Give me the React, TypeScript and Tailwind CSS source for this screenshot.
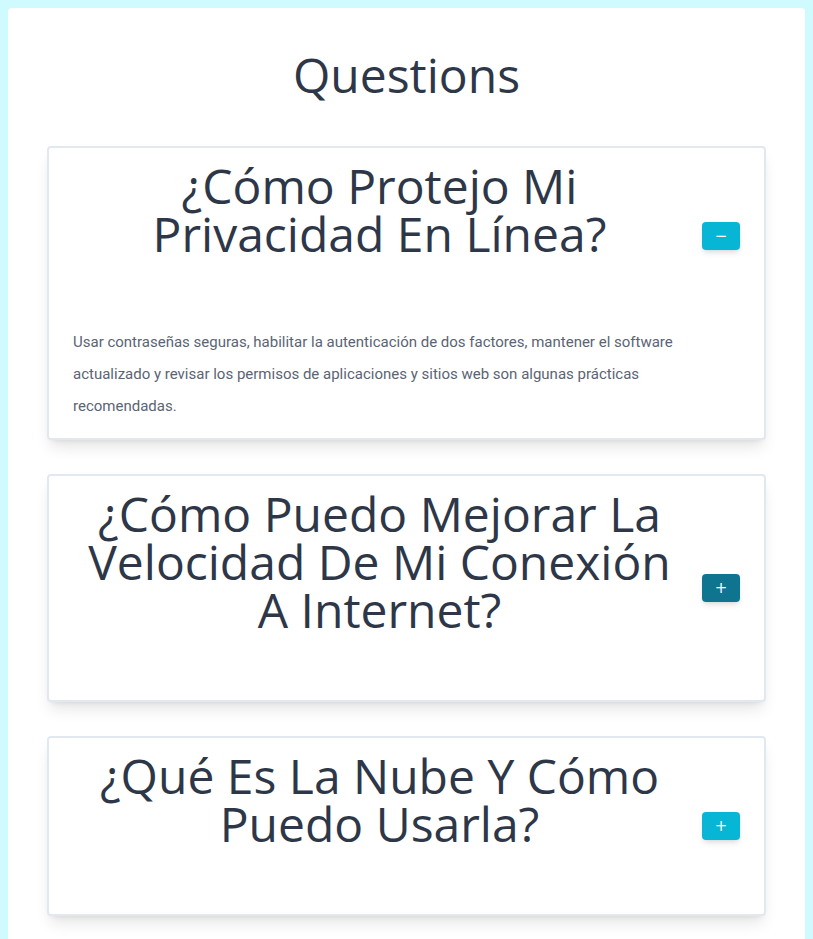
import React from "react";

const items = [
  {
    q: "¿Cómo Protejo Mi Privacidad En Línea?",
    a: "Usar contraseñas seguras, habilitar la autenticación de dos factores, mantener el software actualizado y revisar los permisos de aplicaciones y sitios web son algunas prácticas recomendadas.",
    open: true,
    dark: false,
  },
  {
    q: "¿Cómo Puedo Mejorar La Velocidad De Mi Conexión A Internet?",
    a: "",
    open: false,
    dark: true,
  },
  {
    q: "¿Qué Es La Nube Y Cómo Puedo Usarla?",
    a: "",
    open: false,
    dark: false,
  },
];

export default function App() {
  return (
    <div className="min-h-[939px] bg-[#cffafe] px-2 pt-2">
      <div className="min-h-[931px] rounded bg-white px-[39px] pt-[43px] pb-10">
        <h1
          className="mb-[47px] text-center text-[48px] leading-[48px] text-[#2d3748]"
          style={{ fontFamily: '"Open Sans", sans-serif' }}
        >
          Questions
        </h1>
        <div className="flex flex-col gap-[34px]">
          {items.map((it, i) => (
            <div
              key={i}
              className="rounded border-2 border-[#e2e8f0] bg-white shadow-lg"
            >
              <div className="flex items-center gap-4 px-6">
                <h2
                  className="flex-1 pt-[14px] pb-[66px] text-center text-[48px] leading-[48px] text-[#2d3748]"
                  style={{ fontFamily: '"Open Sans", sans-serif' }}
                >
                  {it.q}
                </h2>
                <button
                  className={`flex h-7 w-[38px] items-center justify-center rounded text-[15px] leading-none text-white shadow-md ${
                    it.dark ? "bg-[#0e7490]" : "bg-[#06b6d4]"
                  }`}
                  style={{ fontFamily: '"DejaVu Sans", sans-serif' }}
                >
                  {it.open ? "−" : "+"}
                </button>
              </div>
              {it.open && (
                <p
                  className="mt-[2px] px-6 pb-4 text-[15px] leading-8 text-[#5a6474]"
                  style={{ fontFamily: "Roboto, sans-serif" }}
                >
                  {it.a}
                </p>
              )}
            </div>
          ))}
        </div>
      </div>
    </div>
  );
}
